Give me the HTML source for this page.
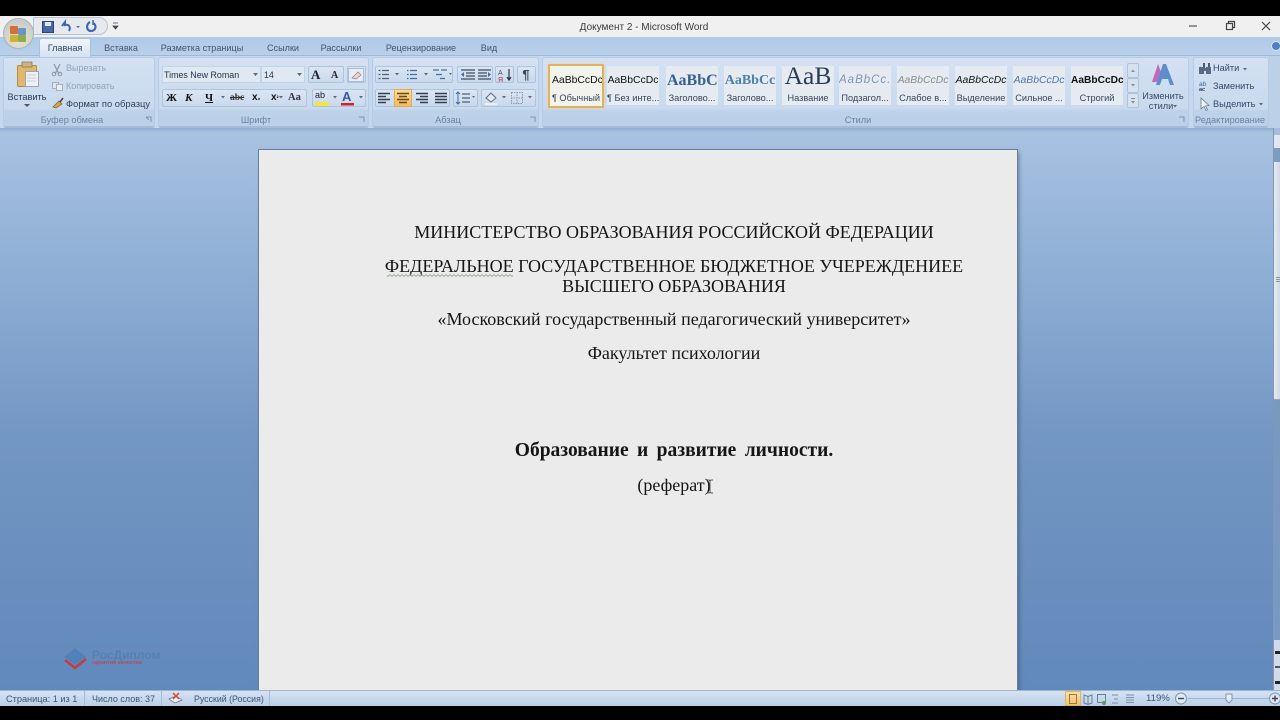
<!DOCTYPE html>
<html lang="ru"><head><meta charset="utf-8"><title>Документ 2 - Microsoft Word</title>
<style>
html,body{margin:0;padding:0;width:1280px;height:720px;overflow:hidden;background:#000}
*{box-sizing:border-box}
.a{position:absolute}
.t{position:absolute;margin-top:1px;white-space:nowrap;font-family:"Liberation Sans",sans-serif;font-size:9.2px;line-height:12px;color:#44566f}
.c{transform:translateX(-50%)}
.doc{position:absolute;white-space:nowrap;font-family:"Liberation Serif",serif;font-size:18px;line-height:22px;color:#151515;transform:translateX(-50%)}
.grp{position:absolute;top:57px;height:71px;background:linear-gradient(#d3e1f2 0,#c9daee 74%,#bdd1e9 78%,#bcd0e8 100%);border:1px solid #b6cbe4;border-bottom:2px solid #a5bcd9;border-radius:3px}
.box{position:absolute;background:linear-gradient(#dbe6f4,#c9d9ec);border:1px solid #afc3dc;border-radius:2px}
.sty{position:absolute;top:66px;width:52px;height:39px;background:#e6ebf2;overflow:hidden}
.s1{position:absolute;left:0;right:0;top:7px;text-align:center;white-space:nowrap;overflow:hidden;font-family:"Liberation Sans",sans-serif;font-size:10.4px;line-height:15px;color:#111}
.s2{position:absolute;left:0;right:0;top:26px;text-align:center;white-space:nowrap;font-family:"Liberation Sans",sans-serif;font-size:9.2px;line-height:12px;color:#35455e}
svg{position:absolute;overflow:visible}
</style></head><body>
<div class="a" style="left:0;top:16px;width:1280px;height:690px;overflow:hidden;background:#c5d8ee"></div>

<!-- title bar -->
<div class="a" style="left:0;top:16px;width:1280px;height:21px;background:#f0f0f0"></div>
<div class="a" style="left:0;top:37px;width:1280px;height:19px;background:linear-gradient(#afc9e8,#b9d0ea);border-bottom:1px solid #9fb8d6"></div>
<div class="a" style="left:33px;top:17px;width:75px;height:18px;background:#e6e9ee;border:1px solid #b9c4d2;border-radius:0 10px 10px 0"></div>
<div class="t c" style="left:644px;top:21px;font-size:10px;color:#3a3a3a">Документ 2 - Microsoft Word</div>

<!-- office button -->
<div class="a" style="left:3px;top:18px;width:31px;height:31px;border-radius:50%;background:radial-gradient(circle at 50% 70%,#ece4c8,#c9cdc9 75%,#dfe5ec);border:1px solid #a9b4c2"></div>
<div class="a" style="left:10px;top:26px;width:8px;height:8px;background:#d0703a;border-radius:1px"></div>
<div class="a" style="left:18px;top:28px;width:8px;height:7px;background:#6a95c8;border-radius:1px"></div>
<div class="a" style="left:10px;top:35px;width:8px;height:7px;background:#c9b23c;border-radius:1px"></div>
<div class="a" style="left:18px;top:35px;width:8px;height:7px;background:#8cae48;border-radius:1px"></div>

<!-- QAT -->
<svg style="left:0;top:0" width="130" height="37">
<rect x="42.500" y="21.500" width="11" height="11" fill="#4868a8" stroke="#2d4678"/><rect x="45" y="22" width="6" height="4" fill="#dfe7f2"/>
<path d="M62 26 L65 22 V25 C69 24 71 27 69 31" fill="none" stroke="#3c67b0" stroke-width="2"/>
<path d="M76 26h4l-2 2z" fill="#667"/>
<path d="M90 22 C86 24 86 31 91 31 C96 31 97 25 93 23" fill="none" stroke="#3c67b0" stroke-width="2.200"/><path d="M93 20v5" stroke="#3c67b0" stroke-width="1.500"/>
<path d="M113 23h5M113 26h5l-2.500 3z" fill="#445" stroke="#445" stroke-width=".8"/>
</svg>

<!-- window controls -->
<svg style="left:0;top:0" width="1280" height="40">
<path d="M1189 26h8" stroke="#555" stroke-width="1.200"/>
<rect x="1226.500" y="23.500" width="6" height="6" fill="none" stroke="#444" stroke-width="1.200"/><path d="M1228.500 23v-1.500h6v6h-1.500" fill="none" stroke="#444" stroke-width="1.200"/>
<path d="M1262 22l8 8M1270 22l-8 8" stroke="#444" stroke-width="1.200"/>
<circle cx="1276" cy="46" r="4.500" fill="#4d81c2" stroke="#dbe7f5"/>
</svg>

<!-- tabs -->
<div class="a" style="left:39px;top:38px;width:52px;height:19px;background:linear-gradient(#f2f6fb,#d3e1f2);border:1px solid #a9c0dc;border-bottom:none;border-radius:3px 3px 0 0"></div>
<div class="t c" style="left:65px;top:41px;font-size:9.1px;color:#33445e">Главная</div>
<div class="t c" style="left:121px;top:41px;font-size:9.1px">Вставка</div>
<div class="t c" style="left:202px;top:41px;font-size:9.1px">Разметка страницы</div>
<div class="t c" style="left:283px;top:41px;font-size:9.1px">Ссылки</div>
<div class="t c" style="left:341px;top:41px;font-size:9.1px">Рассылки</div>
<div class="t c" style="left:421px;top:41px;font-size:9.1px">Рецензирование</div>
<div class="t c" style="left:489px;top:41px;font-size:9.1px">Вид</div>

<!-- ribbon groups -->
<div class="grp" style="left:3px;width:152px"></div>
<div class="grp" style="left:158px;width:211px"></div>
<div class="grp" style="left:372px;width:167px"></div>
<div class="grp" style="left:542px;width:647px"></div>
<div class="grp" style="left:1193px;width:76px"></div>
<div class="a" style="left:1269px;top:56px;width:11px;height:72px;background:#bcd0e8"></div>

<div class="t c" style="left:72px;top:113px;color:#6a83a3">Буфер обмена</div>
<div class="t c" style="left:256px;top:113px;color:#6a83a3">Шрифт</div>
<div class="t c" style="left:448px;top:113px;color:#6a83a3">Абзац</div>
<div class="t c" style="left:858px;top:113px;color:#6a83a3">Стили</div>
<div class="t c" style="left:1230px;top:113px;color:#6a83a3">Редактирование</div>

<!-- clipboard -->
<svg style="left:0;top:0" width="160" height="125">
<rect x="17.500" y="65.500" width="19" height="21" rx="1" fill="#e3b768" stroke="#b58c45"/>
<rect x="22" y="62" width="10" height="5" fill="#c9b48a" stroke="#8b7348" stroke-width=".7"/>
<rect x="25.500" y="71.500" width="13" height="15" fill="#eef1f5" stroke="#98a5b5"/>
<path d="M27 75h9M27 78h9M27 81h9" stroke="#b8c2ce" stroke-width=".8"/>
<path d="M24 104h6l-3 3z" fill="#555"/>
<path d="M54 64l5 10M60 64l-5 10" stroke="#8d97a5" stroke-width="1.200"/><circle cx="54" cy="74" r="1.800" fill="none" stroke="#8d97a5"/><circle cx="60" cy="74" r="1.800" fill="none" stroke="#8d97a5"/>
<rect x="52.500" y="82.500" width="6" height="6" fill="#dfe6ef" stroke="#a2b0c2"/><rect x="56.500" y="84.500" width="6" height="6" fill="#e9eef4" stroke="#a2b0c2"/>
<path d="M53 107l6-6 3 3-6 4z" fill="#d9a846" stroke="#6d5a2a" stroke-width=".7"/><path d="M60 102l3-4" stroke="#444" stroke-width="1.500"/>
<path d="M146 117h5v5M149 120l-3-3" fill="none" stroke="#7d93af"/>
<path d="M359 117h5v5" fill="none" stroke="#7d93af"/>
</svg>
<div class="t c" style="left:27px;top:90px;color:#2b3a52">Вставить</div>
<div class="t" style="left:66px;top:61px;font-size:9px;color:#94a3b8">Вырезать</div>
<div class="t" style="left:66px;top:79px;font-size:9px;color:#94a3b8">Копировать</div>
<div class="t" style="left:66px;top:97px;font-size:9.4px;color:#2f3f5a">Формат по образцу</div>

<!-- font -->
<div class="a" style="left:162px;top:66px;width:99px;height:17px;background:#dfe8f3;border:1px solid #c3d3e6"></div>
<div class="a" style="left:261px;top:66px;width:44px;height:17px;background:#dfe8f3;border:1px solid #c3d3e6"></div>
<div class="t" style="left:164px;top:68px;font-size:8.900px;color:#26344a">Times New Roman</div>
<div class="t" style="left:264px;top:68px;font-size:8.900px;color:#26344a">14</div>
<div class="box" style="left:308px;top:66px;width:36px;height:17px"></div>
<div class="box" style="left:347px;top:66px;width:19px;height:17px"></div>
<div class="box" style="left:162px;top:89px;width:145px;height:18px"></div>
<div class="box" style="left:312px;top:89px;width:54px;height:18px"></div>
<svg style="left:0;top:0" width="380" height="112">
<path d="M253 73h5l-2.500 3zM297 73h5l-2.500 3zM221 96h4l-2 2.500zM279 96h4l-2 2.500zM306 96h0M333 96h4l-2 2.500zM359 96h4l-2 2.500z" fill="#5c6b80"/>
<rect x="348.500" y="68.500" width="15" height="13" fill="#e6edf6" stroke="#a9bcd3"/><path d="M352 78l6-6 3 3-5 4z" fill="#f1d4c8" stroke="#8d7f86" stroke-width=".7"/>
<rect x="341" y="103" width="13" height="2.500" fill="#d61f26"/>
<rect x="315" y="102" width="14" height="4" fill="#f1e63a"/>
</svg>
<div class="t" style="left:311px;top:66px;font:bold 13px/15px 'Liberation Serif',serif;color:#223">A</div>
<div class="t" style="left:331px;top:68px;font:bold 10px/13px 'Liberation Serif',serif;color:#223">A</div>
<div class="t" style="left:166px;top:90px;font:bold 11px/14px 'Liberation Serif',serif;color:#111">Ж</div>
<div class="t" style="left:185px;top:90px;font:italic bold 11px/14px 'Liberation Serif',serif;color:#111">К</div>
<div class="t" style="left:205px;top:90px;font:bold 11px/14px 'Liberation Serif',serif;color:#111;text-decoration:underline">Ч</div>
<div class="t" style="left:230px;top:91px;font:bold 9.500px/13px 'Liberation Serif',serif;color:#333;text-decoration:line-through">abc</div>
<div class="t" style="left:252px;top:90px;font:bold 10px/14px 'Liberation Sans',sans-serif;color:#111">x<span style="font-size:6px">₂</span></div>
<div class="t" style="left:271px;top:90px;font:bold 10px/14px 'Liberation Sans',sans-serif;color:#111">x<span style="font-size:6px">²</span></div>
<div class="t" style="left:288px;top:90px;font:bold 10.500px/14px 'Liberation Serif',serif;color:#334">Aa</div>
<div class="t" style="left:315px;top:89px;font:9px/11px 'Liberation Sans',sans-serif;color:#223">ab</div>
<div class="t" style="left:342px;top:88px;font:bold 13px/15px 'Liberation Sans',sans-serif;color:#3858a5">A</div>

<!-- paragraph -->
<div class="box" style="left:375px;top:66px;width:78px;height:17px"></div>
<div class="box" style="left:457px;top:66px;width:36px;height:17px"></div>
<div class="box" style="left:495px;top:66px;width:19px;height:17px"></div>
<div class="box" style="left:517px;top:66px;width:19px;height:17px"></div>
<div class="box" style="left:375px;top:89px;width:75px;height:18px"></div>
<div class="box" style="left:453px;top:89px;width:25px;height:18px"></div>
<div class="box" style="left:481px;top:89px;width:55px;height:18px"></div>
<div class="a" style="left:394px;top:89px;width:18px;height:18px;background:linear-gradient(#fbdc94,#f6bb5c);border:1px solid #e1ad5d"></div>
<svg style="left:0;top:0" width="540" height="125">
<g stroke="#4f5f76" stroke-width="1.200" fill="none">
<path d="M382 70.500h7M382 74.500h7M382 78.500h7M378.500 70.500h2M378.500 74.500h2M378.500 78.500h2"/>
<path d="M410 70.500h7M410 74.500h7M410 78.500h7M407 70.500h1.500M407 74.500h1.500M407 78.500h1.500" stroke="#3e6da8"/>
<path d="M433 70h6M441 70h6M436 74.500h6M440 78.500h5" stroke="#4a6d99"/>
<path d="M461 70h14M466 73h9M466 76h9M461 79h14M478 70h13M478 73h9M478 76h9M478 79h13" stroke="#3f4c60"/>
</g>
<path d="M395 73h4l-2 2.500zM424 73h4l-2 2.500zM449 73h3l-1.500 2zM472 96h3l-1.500 2zM502 96h4l-2 2.500zM528 96h4l-2 2.500z" fill="#5c6b80"/>
<path d="M464 72l-3 2.500 3 2.500zM488 72l3 2.500-3 2.500z" fill="#3f6ea8"/>
<text x="498" y="75" font-family="Liberation Sans" font-size="7" fill="#44556e">A</text><text x="498" y="82" font-family="Liberation Sans" font-size="7" fill="#a33">Я</text>
<path d="M509 69v11M507 77l2 3 2-3" fill="none" stroke="#334" stroke-width="1.200"/>
<text x="526" y="79" text-anchor="middle" font-family="Liberation Sans" font-weight="bold" font-size="13" fill="#3a465a">¶</text>
<g stroke="#333f50" stroke-width="1.400">
<path d="M378 93.500h12M378 96.500h8M378 99.500h12M378 102.500h8"/>
<path d="M397 93.500h12M399 96.500h8M397 99.500h12M399 102.500h8" stroke="#6a4a1c"/>
<path d="M416 93.500h12M420 96.500h8M416 99.500h12M420 102.500h8"/>
<path d="M435 93.500h12M435 96.500h12M435 99.500h12M435 102.500h12"/>
<path d="M462 94h8M462 98h8M462 102h8" stroke-width="1.100"/>
</g>
<path d="M458 92v12M456 94l2-2 2 2M456 102l2 2 2-2" fill="none" stroke="#3d6ca8"/>
<path d="M486 98l5-5 5 5-5 4z" fill="#e6ecf4" stroke="#5c6b80"/><rect x="485" y="103" width="12" height="2" fill="#eef0f3"/>
<rect x="511.500" y="92.500" width="11" height="11" fill="none" stroke="#8a9bb1" stroke-dasharray="1.500 1"/><path d="M517 92v12M511 98h12" stroke="#8a9bb1" stroke-dasharray="1.500 1"/>
<path d="M530 117h5v5" fill="none" stroke="#7d93af"/>
<path d="M1179 117h5v5" fill="none" stroke="#7d93af"/>
</svg>

<!-- styles -->
<div class="sty" style="left:548px;width:56px;height:44px;top:64px;background:#f3f3ee;border:2px solid #e3b05b;box-shadow:0 0 2px #f6d08e"><div class="s1" style="top:7px;padding:0 2px">AaBbCcDc</div><div class="s2" style="top:26px">¶ Обычный</div></div>
<div class="sty" style="left:607px"><div class="s1">AaBbCcDc</div><div class="s2">¶ Без инте...</div></div>
<div class="sty" style="left:666px"><div class="s1" style="font:bold 16px/15px 'Liberation Serif',serif;color:#365f91;text-align:left;padding-left:1px">AaBbCc</div><div class="s2">Заголово...</div></div>
<div class="sty" style="left:724px"><div class="s1" style="font:bold 14px/15px 'Liberation Serif',serif;color:#4f81a8">AaBbCc</div><div class="s2">Заголово...</div></div>
<div class="sty" style="left:782px"><div class="s1" style="top:-2px;font:25.500px/24px 'Liberation Serif',serif;color:#2b3d55">AaB</div><div class="s2">Название</div></div>
<div class="sty" style="left:839px"><div class="s1" style="font:italic 11.500px/15px 'Liberation Sans',sans-serif;color:#7f96b3;letter-spacing:1px">AaBbCc.</div><div class="s2">Подзагол...</div></div>
<div class="sty" style="left:897px"><div class="s1" style="font:italic 10.400px/15px 'Liberation Sans',sans-serif;color:#8c8c8c">AaBbCcDc</div><div class="s2">Слабое в...</div></div>
<div class="sty" style="left:955px"><div class="s1" style="font:italic 10.400px/15px 'Liberation Sans',sans-serif;color:#111">AaBbCcDc</div><div class="s2">Выделение</div></div>
<div class="sty" style="left:1013px"><div class="s1" style="font:italic 10.400px/15px 'Liberation Sans',sans-serif;color:#4f78ae">AaBbCcDc</div><div class="s2">Сильное ...</div></div>
<div class="sty" style="left:1071px"><div class="s1" style="font:bold 10.200px/15px 'Liberation Sans',sans-serif;color:#111">AaBbCcDc</div><div class="s2">Строгий</div></div>
<div class="box" style="left:1127px;top:63px;width:12px;height:15px;background:#d6e2f0"></div>
<div class="box" style="left:1127px;top:78px;width:12px;height:15px;background:#d6e2f0"></div>
<div class="box" style="left:1127px;top:93px;width:12px;height:15px;background:#d6e2f0"></div>
<svg style="left:0;top:0" width="1280" height="125">
<path d="M1131 72l2-2.500 2 2.500zM1131 84h4l-2 2.500zM1131 99h4M1131 101h4l-2 2.500z" fill="#7d8ea5" stroke="none"/><path d="M1131 98.500h4" stroke="#7d8ea5"/>
<path d="M1152 82l6-18 3 8-4 10z" fill="#c06ab8"/>
<path d="M1156 85l7-21h3l8 21h-4l-2-6h-6l-2 6z" fill="#5b8ecb"/>
<path d="M1203 63h2v5h-2zM1208 63h2v5h-2z" fill="#4a5b72"/>
<rect x="1199" y="67" width="5" height="7" fill="#5a6a82"/><rect x="1206" y="67" width="5" height="7" fill="#5a6a82"/><rect x="1203" y="68" width="4" height="3" fill="#5a6a82"/>
<text x="1199" y="86" font-family="Liberation Sans" font-size="6.500" fill="#3a6aa5">ab</text><text x="1199" y="91" font-family="Liberation Sans" font-weight="bold" font-size="5.500" fill="#335">ac</text>
<path d="M1201 98v11l3-2.500 2 4 1.500-.8-2-3.800 3.500-.4z" fill="#edf1f6" stroke="#6c7c92" stroke-width=".8"/>
<path d="M1243 68h4l-2 2.500zM1259 103h4l-2 2.500z" fill="#5c6b80"/>
<path d="M1173 105h4l-2 2.500z" fill="#5c6b80"/>
</svg>
<div class="t c" style="left:1163px;top:89px;color:#35496a">Изменить</div>
<div class="t c" style="left:1161px;top:99px;color:#35496a">стили</div>
<div class="t" style="left:1213px;top:61px;color:#35496a">Найти</div>
<div class="t" style="left:1213px;top:79px;color:#35496a">Заменить</div>
<div class="t" style="left:1213px;top:97px;color:#35496a">Выделить</div>

<!-- document area -->
<div class="a" style="left:0;top:128px;width:1280px;height:562px;background:linear-gradient(#a9c3e2 0,#8fafd5 25%,#7396c3 55%,#6189bb 100%)"></div>
<div class="a" style="left:0;top:128px;width:1280px;height:4px;background:linear-gradient(#8eaace,rgba(142,170,206,0))"></div>
<div class="a" style="left:259px;top:150px;width:758px;height:540px;background:#ebebeb;box-shadow:0 0 0 1px #6a7e9a,2px 2px 4px rgba(40,60,90,.5)"></div>

<div class="doc" style="left:674px;top:221px">МИНИСТЕРСТВО ОБРАЗОВАНИЯ РОССИЙСКОЙ ФЕДЕРАЦИИ</div>
<div class="doc" style="left:674px;top:255px">ФЕДЕРАЛЬНОЕ ГОСУДАРСТВЕННОЕ БЮДЖЕТНОЕ УЧЕРЕЖДЕНИЕЕ</div>
<div class="doc" style="left:674px;top:275px">ВЫСШЕГО ОБРАЗОВАНИЯ</div>
<div class="doc" style="left:674px;top:308px">«Московский государственный педагогический университет»</div>
<div class="doc" style="left:674px;top:342px">Факультет психологии</div>
<div class="doc" style="left:674px;top:440px;font-weight:bold;font-size:19.500px;word-spacing:3.500px">Образование и развитие личности.</div>
<div class="doc" style="left:674px;top:474px">(реферат)</div>
<svg style="left:0;top:0" width="1280" height="720">
<path d="M387 275.500 q1 1.500 2 0 t2 0 t2 0 t2 0 t2 0 t2 0 t2 0 t2 0 t2 0 t2 0 t2 0 t2 0 t2 0 t2 0 t2 0 t2 0 t2 0 t2 0 t2 0 t2 0 t2 0 t2 0 t2 0 t2 0 t2 0 t2 0 t2 0 t2 0 t2 0 t2 0 t2 0 t2 0 t2 0 t2 0 t2 0 t2 0 t2 0 t2 0 t2 0 t2 0 t2 0 t2 0 t2 0 t2 0 t2 0 t2 0 t2 0 t2 0 t2 0 t2 0 t2 0 t2 0 t2 0 t2 0 t2 0 t2 0 t2 0 t2 0 t2 0 t2 0 t2 0 t2 0 t2 0" fill="none" stroke="#7aa874" stroke-width=".8"/>
<path d="M707 480h2l1 1 1-1h2M707 493h2l1-1 1 1h2M710 481v11" fill="none" stroke="#555" stroke-width=".9"/>
<!-- logo -->
<path d="M75 648l11 9-11 8-11-8z" fill="#4f7fb8" opacity=".85"/>
<path d="M65 660l10 8 11-9" fill="none" stroke="#c83a40" stroke-width="2.500"/>
</svg>
<div class="t" style="left:92px;top:647px;font:bold 12px/15px 'Liberation Sans',sans-serif;color:#5480b4">РосДиплом</div>
<div class="t" style="left:92px;top:659px;font:bold 5.500px/7px 'Liberation Sans',sans-serif;color:#b84a5a">гарантия качества</div>

<!-- scrollbar -->
<div class="a" style="left:1273px;top:128px;width:7px;height:562px;background:#a8bdd8;border-left:1px solid #7e98ba"></div>
<div class="a" style="left:1274px;top:135px;width:6px;height:13px;background:#dfe8f2"></div>
<div class="a" style="left:1274px;top:148px;width:6px;height:14px;background:#7f9cc0"></div>
<div class="a" style="left:1274px;top:162px;width:6px;height:238px;background:linear-gradient(90deg,#e6ebf2,#d0d9e5);border-bottom:1px solid #8ea5c2"></div>
<div class="a" style="left:1276px;top:277px;width:4px;height:6px;background:repeating-linear-gradient(#8a98a8 0 1px,transparent 1px 2px)"></div>
<div class="a" style="left:1274px;top:400px;width:6px;height:240px;background:#7a99c0"></div>
<div class="a" style="left:1274px;top:640px;width:6px;height:50px;background:#cfdbe9"></div>
<div class="a" style="left:1275px;top:651px;width:5px;height:3px;background:#222"></div>
<div class="a" style="left:1275px;top:666px;width:5px;height:2px;background:#555"></div>
<div class="a" style="left:1275px;top:681px;width:5px;height:3px;background:#222"></div>

<!-- status bar -->
<div class="a" style="left:0;top:690px;width:1280px;height:16px;background:linear-gradient(#d6e3f2,#b9cfe8);border-top:1px solid #9db5d2"></div>
<div class="t" style="left:6px;top:692px;font-size:9.200px;color:#3f5573">Страница: 1 из 1</div>
<div class="t" style="left:92px;top:692px;font-size:9px;color:#3f5573">Число слов: 37</div>
<div class="t" style="left:194px;top:692px;font-size:8.800px;color:#3f5573">Русский (Россия)</div>
<div class="a" style="left:84px;top:691px;width:1px;height:15px;background:#a5bbd6"></div>
<div class="a" style="left:161px;top:691px;width:1px;height:15px;background:#a5bbd6"></div>
<div class="a" style="left:269px;top:691px;width:1px;height:15px;background:#a5bbd6"></div>
<div class="a" style="left:1065px;top:691px;width:16px;height:15px;background:linear-gradient(#fbdfa3,#f5c36f);border:1px solid #e0b36a"></div>
<svg style="left:0;top:0" width="1280" height="720">
<path d="M169 699l7-3 6 4-7 3z" fill="#eef1f5" stroke="#667" stroke-width=".7"/>
<path d="M173 693l6 6M179 693l-6 6" stroke="#d0452c" stroke-width="1.400"/>
<rect x="1069.500" y="694.500" width="7" height="9" fill="none" stroke="#9a7a3c"/>
<path d="M1084 695l4 1.500 4-1.500v8l-4 1.500-4-1.500zM1088 696.500v8" fill="none" stroke="#6b7f9a"/>
<rect x="1097.500" y="694.500" width="8" height="8" fill="none" stroke="#6b7f9a"/><circle cx="1104" cy="703" r="2" fill="#5c9e5c"/>
<path d="M1112 695h6M1114 699h4M1112 703h6" stroke="#7d8fa6"/>
<path d="M1126 695h8M1126 697.500h8M1126 700h8M1126 702.500h8" stroke="#7d8fa6"/>
<circle cx="1181" cy="698.500" r="5.500" fill="#dfe8f3" stroke="#8097b4"/><path d="M1178 698.500h6" stroke="#445" stroke-width="1.400"/>
<path d="M1188 698.500h82" stroke="#9fb4cf"/>
<path d="M1226 694h6v6l-3 3-3-3z" fill="#e6ecf4" stroke="#8097b4"/>
<circle cx="1275" cy="698.500" r="5.500" fill="#dfe8f3" stroke="#8097b4"/><path d="M1272 698.500h6M1275 695.500v6" stroke="#445" stroke-width="1.400"/>
</svg>
<div class="t" style="left:1146px;top:692px;font-size:9.600px;color:#3f5573">119%</div>

<!-- black bars -->
<div class="a" style="left:0;top:0;width:1280px;height:16px;background:#000"></div>
<div class="a" style="left:0;top:706px;width:1280px;height:14px;background:#000"></div>
</body></html>
